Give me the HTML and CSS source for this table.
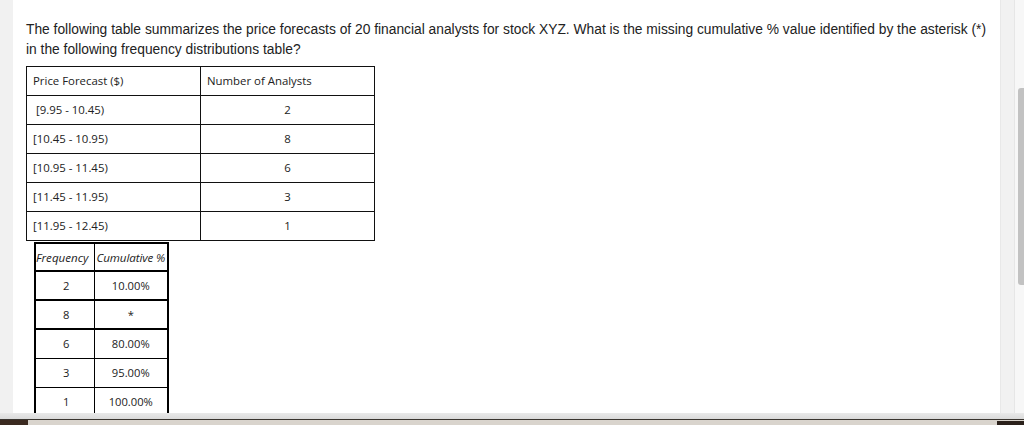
FILE: index.html
```html
<!DOCTYPE html>
<html>
<head>
<meta charset="utf-8">
<link rel="stylesheet" href="styles.css">
</head>
<body>
<div class="shell">
  <div class="panel">
    <p class="question">The following table summarizes the price forecasts of 20 financial analysts for stock XYZ. What is the missing cumulative % value identified by the asterisk (*) in the following frequency distributions table?</p>
    <table class="forecast">
      <tr><td class="range">Price Forecast ($)</td><td class="head">Number of Analysts</td></tr>
      <tr><td class="range">&nbsp;[9.95 - 10.45)</td><td class="num">2</td></tr>
      <tr><td class="range">[10.45 - 10.95)</td><td class="num">8</td></tr>
      <tr><td class="range">[10.95 - 11.45)</td><td class="num">6</td></tr>
      <tr><td class="range">[11.45 - 11.95)</td><td class="num">3</td></tr>
      <tr><td class="range">[11.95 - 12.45)</td><td class="num">1</td></tr>
    </table>
    <table class="freq">
      <tr class="fhead"><td class="c1"><span>Frequency</span></td><td class="c2"><span>Cumulative %</span></td></tr>
      <tr class="thick"><td class="c1">2</td><td class="c2">10.00%</td></tr>
      <tr class="thick"><td class="c1">8</td><td class="c2">*</td></tr>
      <tr><td class="c1">6</td><td class="c2">80.00%</td></tr>
      <tr><td class="c1">3</td><td class="c2">95.00%</td></tr>
      <tr><td class="c1">1</td><td class="c2">100.00%</td></tr>
    </table>
  </div>
  <div class="gutter"></div>
  <div class="track"><div class="thumb"></div></div>
</div>
<div class="footer"><div class="footer-left"></div><div class="footer-mid"></div><div class="footer-right"></div></div>
</body>
</html>
```
FILE: styles.css
```css
html, body {
  margin: 0;
  padding: 0;
}
body {
  width: 1024px;
  height: 425px;
  overflow: hidden;
  background: #f1f1f1;
  font-family: "Open Sans", sans-serif;
}
.shell {
  display: flex;
  height: 413px;
}
.panel {
  margin-left: 13px;
  width: 962px;
  padding: 20px 13px 0 13px;
  background: #ffffff;
  overflow: hidden;
  border-right: 1px solid #e8e8e8;
}
.gutter {
  width: 13px;
  border-right: 1px solid #e6e6e6;
}
.track {
  width: 9px;
  background: #f7f7f7;
  display: flex;
  justify-content: flex-end;
}
.thumb {
  margin-top: 88px;
  width: 6px;
  height: 197px;
  background: #c2c2c2;
  border-radius: 3px 0 0 3px;
}
.question {
  margin: 0;
  font-family: "Liberation Sans", Arial, sans-serif;
  font-size: 13.8px;
  line-height: 20px;
  color: #222;
  width: 962px;
}
.forecast {
  margin-top: 6px;
  border-collapse: collapse;
  width: 349px;
  font-size: 11.4px;
  color: #222;
}
.forecast td {
  border: 1px solid #111;
  height: 29px;
  padding: 0 0 1px 6px;
  box-sizing: border-box;
}
.forecast td.range {
  width: 174px;
}
.forecast td.head {
  text-align: left;
}
.forecast td.num {
  text-align: center;
  padding-left: 0;
}
.freq {
  margin-left: 8px;
  margin-top: 1px;
  border-collapse: collapse;
  width: 133px;
  table-layout: fixed;
  font-size: 11.2px;
  color: #222;
  border: 2px solid #000;
}
.freq td {
  border: 1px solid #000;
  height: 29px;
  padding: 0;
  text-align: center;
  box-sizing: border-box;
  overflow: hidden;
  white-space: nowrap;
}
.freq .c1 {
  width: 59px;
  border-left: 2px solid #000;
  padding-left: 3px;
}
.freq .c2 {
  width: 74px;
  border-right: 2px solid #000;
}
.freq tr.thick td {
  border-bottom: 2px solid #000;
}
.freq tr.fhead td {
  height: 28px;
  font-style: italic;
  font-size: 11.6px;
  border-bottom: 2px solid #000;
  text-align: left;
  padding-left: 0;
}
.freq tr.fhead td.c2 {
  padding-left: 2px;
  letter-spacing: -0.1px;
}
.footer {
  display: flex;
  height: 12px;
  background: linear-gradient(#e9e9e9 0, #dadada 6px, #3a3530 6px, #3a3530 7px, #d9d4cd 7px);
}
.footer-left {
  width: 28px;
  margin-top: 7px;
  background: #3b2a20;
}
.footer-mid {
  flex: 1;
}
.footer-right {
  width: 27px;
  margin-top: 8px;
  background: #2b211b;
}
```
